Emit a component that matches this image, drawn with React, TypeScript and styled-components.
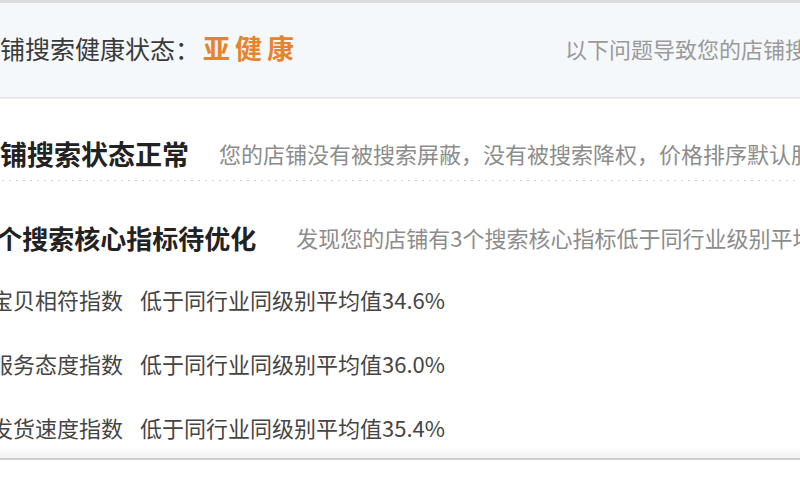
import * as React from 'react'
import styled, { createGlobalStyle } from 'styled-components'

const GlobalStyle = createGlobalStyle`
  html, body {
    margin: 0;
    padding: 0;
    background: #fff;
  }
  body {
    font-family: "Noto Sans CJK SC", "Noto Sans", sans-serif;
  }
`

const Viewport = styled.div`
  width: 800px;
  height: 500px;
  overflow: hidden;
  background: #fff;
`

// the screenshot is cropped on the left, so the panel starts off-screen
const Track = styled.div`
  margin-left: -40px;
  width: 900px;
  white-space: nowrap;
`

const Header = styled.div`
  box-sizing: border-box;
  height: 99px;
  display: flex;
  align-items: center;
  padding: 0 0 5px 15px;
  background: #f5f8fb;
  border-top: 3px solid #dcdcdc;
  border-bottom: 2px solid #e6e7e9;
`

const Label = styled.span`
  font-size: 25px;
  line-height: 28px;
  color: #3a3a3a;
`

const Status = styled.span`
  margin-left: 3px;
  font-size: 27px;
  line-height: 30px;
  font-weight: bold;
  letter-spacing: 5px;
  color: #e8832c;
`

const Hint = styled.span`
  margin-left: 266px;
  font-size: 22px;
  line-height: 26px;
  color: #9a9a9a;
`

const Section = styled.div<{ $top: number; $bottom: number; $indent: number }>`
  display: flex;
  align-items: center;
  padding: ${(p) => p.$top}px 0 ${(p) => p.$bottom}px ${(p) => p.$indent}px;
`

const Title = styled.span<{ $size: number }>`
  font-size: ${(p) => p.$size}px;
  line-height: 27px;
  font-weight: bold;
  color: #222;
`

const Desc = styled.span<{ $gap: number }>`
  margin-left: ${(p) => p.$gap}px;
  font-size: 22px;
  line-height: 27px;
  color: #8c8c8c;
`

const Dots = styled.div`
  height: 1px;
  background: repeating-linear-gradient(to right, #cfcfcf 0 2px, transparent 2px 7px);
`

const List = styled.div`
  display: flex;
  flex-direction: column;
  gap: 42px;
  padding: 37px 0 9px 31px;
`

const Item = styled.div`
  display: flex;
  font-size: 22px;
  line-height: 22px;
  color: #454545;
`

const Metric = styled.span`
  margin-left: 17px;
`

const Footer = styled.div`
  height: 11px;
  background: linear-gradient(to bottom, #fff, #f2f2f2);
  border-bottom: 2px solid #cdcdcd;
`

const metrics = [
  { name: '宝贝相符指数', value: '34.6%' },
  { name: '服务态度指数', value: '36.0%' },
  { name: '发货速度指数', value: '35.4%' },
]

export default function App(): JSX.Element {
  return (
    <Viewport>
      <GlobalStyle />
      <Track>
        <Header>
          <Label>店铺搜索健康状态：</Label>
          <Status>亚健康</Status>
          <Hint>以下问题导致您的店铺搜索排名靠后</Hint>
        </Header>
        <Section $top={41} $bottom={13} $indent={13}>
          <Title $size={27}>店铺搜索状态正常</Title>
          <Desc $gap={30}>您的店铺没有被搜索屏蔽，没有被搜索降权，价格排序默认服务正常</Desc>
        </Section>
        <Dots />
        <Section $top={43} $bottom={0} $indent={21}>
          <Title $size={26}>3个搜索核心指标待优化</Title>
          <Desc $gap={40}>发现您的店铺有3个搜索核心指标低于同行业级别平均值</Desc>
        </Section>
        <List>
          {metrics.map((m) => (
            <Item key={m.name}>
              {m.name}
              <Metric>低于同行业同级别平均值{m.value}</Metric>
            </Item>
          ))}
        </List>
        <Footer />
      </Track>
    </Viewport>
  )
}
